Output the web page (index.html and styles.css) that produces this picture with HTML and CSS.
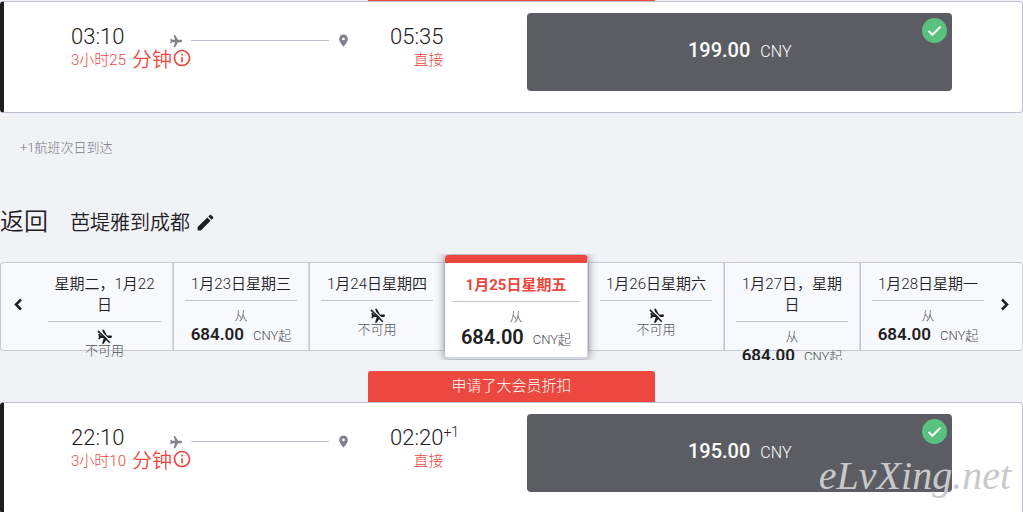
FILE: index.html
```html
<!DOCTYPE html>
<html lang="zh-CN">
<head>
<meta charset="utf-8">
<title>返回 芭堤雅到成都</title>
<meta name="viewport" content="width=device-width, initial-scale=1">
<link rel="stylesheet" href="styles.css">
</head>
<body>
<svg class="sprite" aria-hidden="true">
  <symbol id="plane" viewBox="0 0 24 24"><path d="M22.500 12c0-1.100-.9-2-2-2H15.500L10.500 1.500H7.800l2.500 8.500H5.500L4 8H2l1 4-1 4h2l1.500-2h4.800l-2.500 8.500h2.700l5-8.500h5c1.100 0 2-.9 2-2z"/></symbol>
  <symbol id="pin" viewBox="0 0 24 24"><path d="M12 1C7.600 1 4 4.500 4 9c0 5.700 8 14 8 14s8-8.300 8-14c0-4.500-3.600-8-8-8zm0 10.500a2.500 2.500 0 1 1 0-5 2.500 2.500 0 0 1 0 5z"/></symbol>
  <symbol id="info" viewBox="0 0 24 24"><path d="M11 17h2v-6h-2v6zm1-15C6.480 2 2 6.480 2 12s4.480 10 10 10 10-4.480 10-10S17.520 2 12 2zm0 18c-4.410 0-8-3.590-8-8s3.590-8 8-8 8 3.590 8 8-3.590 8-8 8zM11 9h2V7h-2v2z"/></symbol>
  <symbol id="check" viewBox="0 0 24 24"><path d="M3.500 12.500L9 18 20.500 6.500" fill="none" stroke="currentColor" stroke-width="2.800"/></symbol>
  <symbol id="pencil" viewBox="0 0 24 24"><path d="M3 17.250V21h3.750L17.810 9.940l-3.750-3.750L3 17.250zM20.710 7.040a1 1 0 0 0 0-1.410l-2.340-2.340a1 1 0 0 0-1.410 0l-1.830 1.830 3.750 3.750 1.830-1.830z"/></symbol>
  <symbol id="left" viewBox="0 0 24 24"><path d="M16 4L8 12l8 8" fill="none" stroke="currentColor" stroke-width="4"/></symbol>
  <symbol id="right" viewBox="0 0 24 24"><path d="M8 4l8 8-8 8" fill="none" stroke="currentColor" stroke-width="4"/></symbol>
  <symbol id="noflight" viewBox="0 0 24 24"><path d="M24 12.300c0-1-.8-1.900-1.900-1.900H16L11 1H8.200l2.600 9.400H6L4.300 8H2l1.100 4.300L2 16.500h2.300L6 14.200h4.800L8 23.500h2.800L16.500 14.200h5.600c1.100 0 1.900-.9 1.900-1.900z"/><path d="M3.500 1.500L22.500 20.500" stroke="#f8f9fc" stroke-width="2"/><path d="M1.500 3L20.500 22" stroke="currentColor" stroke-width="2.600"/></symbol>
</svg>

<main class="page">
  <section class="flight">
    <div class="ribbon ribbon-edge"></div>
    <article class="card">
      <div class="leg">
        <time class="clock">03:10</time>
        <div class="track"><svg class="icon-plane"><use href="#plane"/></svg><span class="track-line"></span><svg class="icon-pin"><use href="#pin"/></svg></div>
        <time class="clock">05:35</time>
        <div class="duration"><span>3小时25</span><button class="minutes" type="button">分钟<svg class="icon-info"><use href="#info"/></svg></button></div>
        <span class="direct">直接</span>
      </div>
      <button class="fare" type="button"><strong>199.00</strong><span>CNY</span><span class="badge"><svg class="icon-check"><use href="#check"/></svg></span></button>
    </article>
  </section>

  <p class="note">+1航班次日到达</p>

  <header class="route">
    <h2>返回</h2>
    <h3>芭堤雅到成都</h3>
    <button class="edit" type="button" aria-label="编辑"><svg class="icon-pencil"><use href="#pencil"/></svg></button>
  </header>

  <nav class="dates">
    <div class="day day-first">
      <button class="arrow" type="button" aria-label="前一天"><svg class="icon-arrow"><use href="#left"/></svg></button>
      <button class="day-body" type="button"><span class="date">星期二，1月22日</span><svg class="icon-none"><use href="#noflight"/></svg><span class="none">不可用</span></button>
    </div>
    <div class="day">
      <button class="day-body" type="button"><span class="date">1月23日星期三</span><span class="from">从</span><span class="price"><strong>684.00</strong>CNY起</span></button>
    </div>
    <div class="day">
      <button class="day-body" type="button"><span class="date">1月24日星期四</span><svg class="icon-none"><use href="#noflight"/></svg><span class="none">不可用</span></button>
    </div>
    <div class="day day-active">
      <button class="day-body" type="button"><span class="date">1月25日星期五</span><span class="from">从</span><span class="price"><strong>684.00</strong>CNY起</span></button>
    </div>
    <div class="day">
      <button class="day-body" type="button"><span class="date">1月26日星期六</span><svg class="icon-none"><use href="#noflight"/></svg><span class="none">不可用</span></button>
    </div>
    <div class="day">
      <button class="day-body" type="button"><span class="date">1月27日，星期日</span><span class="from">从</span><span class="price"><strong>684.00</strong>CNY起</span></button>
    </div>
    <div class="day day-last">
      <button class="day-body" type="button"><span class="date">1月28日星期一</span><span class="from">从</span><span class="price"><strong>684.00</strong>CNY起</span></button>
      <button class="arrow" type="button" aria-label="后一天"><svg class="icon-arrow"><use href="#right"/></svg></button>
    </div>
  </nav>

  <section class="flight">
    <div class="ribbon">申请了大会员折扣</div>
    <article class="card">
      <div class="leg">
        <time class="clock">22:10</time>
        <div class="track"><svg class="icon-plane"><use href="#plane"/></svg><span class="track-line"></span><svg class="icon-pin"><use href="#pin"/></svg></div>
        <time class="clock">02:20<sup>+1</sup></time>
        <div class="duration"><span>3小时10</span><button class="minutes" type="button">分钟<svg class="icon-info"><use href="#info"/></svg></button></div>
        <span class="direct">直接</span>
      </div>
      <button class="fare" type="button"><strong>195.00</strong><span>CNY</span><span class="badge"><svg class="icon-check"><use href="#check"/></svg></span></button>
    </article>
  </section>
</main>
<div class="watermark">eLvXing.net</div>
</body>
</html>
```
FILE: styles.css
```css
* { box-sizing: border-box; }

html { height: 100%; overflow: hidden; }

body {
  position: relative;
  min-height: 100%;
  margin: 0;
  background: #f1f2f6;
  color: #1e2022;
  font-family: Roboto, "Noto Sans CJK SC", sans-serif;
  font-weight: 300;
}

button {
  padding: 0;
  border: 0;
  background: none;
  color: inherit;
  font: inherit;
  cursor: pointer;
}

svg { display: block; flex: none; fill: currentColor; }
.sprite { position: absolute; width: 0; height: 0; }

/* Flight card */
.flight { display: flex; flex-direction: column; align-items: center; }

.ribbon {
  width: 28%;
  height: 31px;
  border-radius: 3px 3px 0 0;
  background: #ec483f;
  color: #fff;
  font-size: 15px;
  line-height: 31px;
  text-align: center;
}
.ribbon-edge { height: 1px; border-radius: 0; }

.card {
  display: grid;
  grid-template-columns: 372fr 424fr;
  gap: 84px;
  width: 100%;
  min-height: 112px;
  padding: 11px 70px 20px 67px;
  border: 1px solid #bcc1cf;
  border-left: 4px solid #1c1f1f;
  border-radius: 4px;
  background: #fff;
}

.leg {
  display: grid;
  grid-template-columns: auto 1fr auto;
  grid-template-rows: 24px 24px;
  align-content: start;
  padding-top: 11px;
}
.clock { position: relative; font-size: 22px; line-height: 26px; }
.clock sup { position: absolute; left: 100%; top: -2px; font-size: 14px; line-height: 18px; }

.track {
  display: flex;
  align-items: center;
  padding: 9px 40px 0 45px;
  color: #7f828a;
}
.track-line { flex: 1; height: 1px; margin: 0 8px; background: #b9bfca; }
.icon-plane { width: 14px; height: 14px; }
.icon-pin { width: 13px; height: 13px; }

.duration {
  display: flex;
  grid-column: 1 / 3;
  gap: 6px;
  color: #ec483f;
  font-size: 15px;
  line-height: 24px;
}
.minutes { display: flex; align-items: center; font-size: 20px; font-weight: 350; line-height: 30px; }
.icon-info { width: 20px; height: 20px; margin-bottom: 4px; }
.direct { color: #ec483f; font-size: 15px; line-height: 24px; text-align: right; }

.fare {
  position: relative;
  display: flex;
  align-items: baseline;
  justify-content: center;
  gap: 10px;
  height: 78px;
  border-radius: 4px;
  background: #5c5d62;
  color: #fff;
  font-size: 16px;
  line-height: 74px;
}
.fare strong { font-size: 20px; font-weight: 500; }
.badge {
  position: absolute;
  top: 5px;
  right: 5px;
  display: grid;
  place-items: center;
  width: 25px;
  height: 25px;
  border-radius: 50%;
  background: #5ac281;
}
.icon-check { width: 17px; height: 17px; }

/* Return heading */
.note {
  margin: 25px 20px 0;
  color: #74767d;
  font-size: 13px;
  line-height: 20px;
}
.route { display: flex; align-items: center; height: 32px; margin: 48px 0 16px; }
.route h2, .route h3 { margin: 0; font-weight: 350; line-height: 34px; }
.route h2 { margin-right: 22px; font-size: 24px; }
.route h3 { margin-right: 5px; padding-top: 2px; font-size: 20px; }
.icon-pencil { width: 21px; height: 21px; }

/* Date strip: long entries run past their cell and are cut by the strip */
.dates {
  display: grid;
  grid-template-columns: 173fr 136fr 136fr 143fr 136fr 136fr 163fr;
  grid-template-rows: 89px;
  height: 106px;
  padding-top: 8px;
  margin-bottom: 11px;
  overflow: hidden;
}
.day {
  display: flex;
  align-items: flex-start;
  padding: 11px 11px 0;
  border: 1px solid #c3c8d4;
  border-right-color: #d5d9e2;
  background: #f8f9fc;
}
.day-first { padding-left: 0; border-radius: 4px 0 0 4px; }
.day-last { padding-right: 0; border-radius: 0 4px 4px 0; }

.day-body { display: flex; flex: 1; flex-direction: column; align-items: center; font-size: 13px; }
.date {
  width: 100%;
  padding-bottom: 5px;
  margin-bottom: 7px;
  border-bottom: 1px solid #bcc1cd;
  font-size: 15px;
  font-weight: 350;
  line-height: 21px;
}
.from { color: #505256; line-height: 16px; }
.price { display: flex; align-items: baseline; gap: 9px; color: #4a4c50; line-height: 21px; }
.price strong { color: #1e2022; font-size: 17px; font-weight: 600; }
.none { color: #505256; line-height: 14px; }
.icon-none { width: 15px; height: 15px; }

.arrow { flex: none; align-self: center; width: 47px; padding: 0 0 16px 10px; }
.day-last .arrow { width: 38px; }
.day-last .arrow { padding-left: 13px; }
.icon-arrow { width: 15px; height: 15px; }

.day-active {
  position: relative;
  height: 104px;
  margin-top: -7px;
  padding: 12px 8px 0;
  border: solid #d5d8e0;
  border-width: 0 1px 2px 0;
  border-top: 8px solid #ec483f;
  border-radius: 4px;
  background: #fff;
  box-shadow: 0 0 8px 1px #8d919c;
}
.day-active .date { color: #ec483f; font-weight: 700; }
.day-active .price { line-height: 24px; }
.day-active .price strong { font-size: 20px; }

.watermark {
  position: absolute;
  right: 12px;
  top: 452px;
  color: #c9c9cb;
  font-family: "Liberation Serif", serif;
  font-size: 40px;
  font-style: italic;
  font-weight: 400;
  line-height: 48px;
  pointer-events: none;
}
```
